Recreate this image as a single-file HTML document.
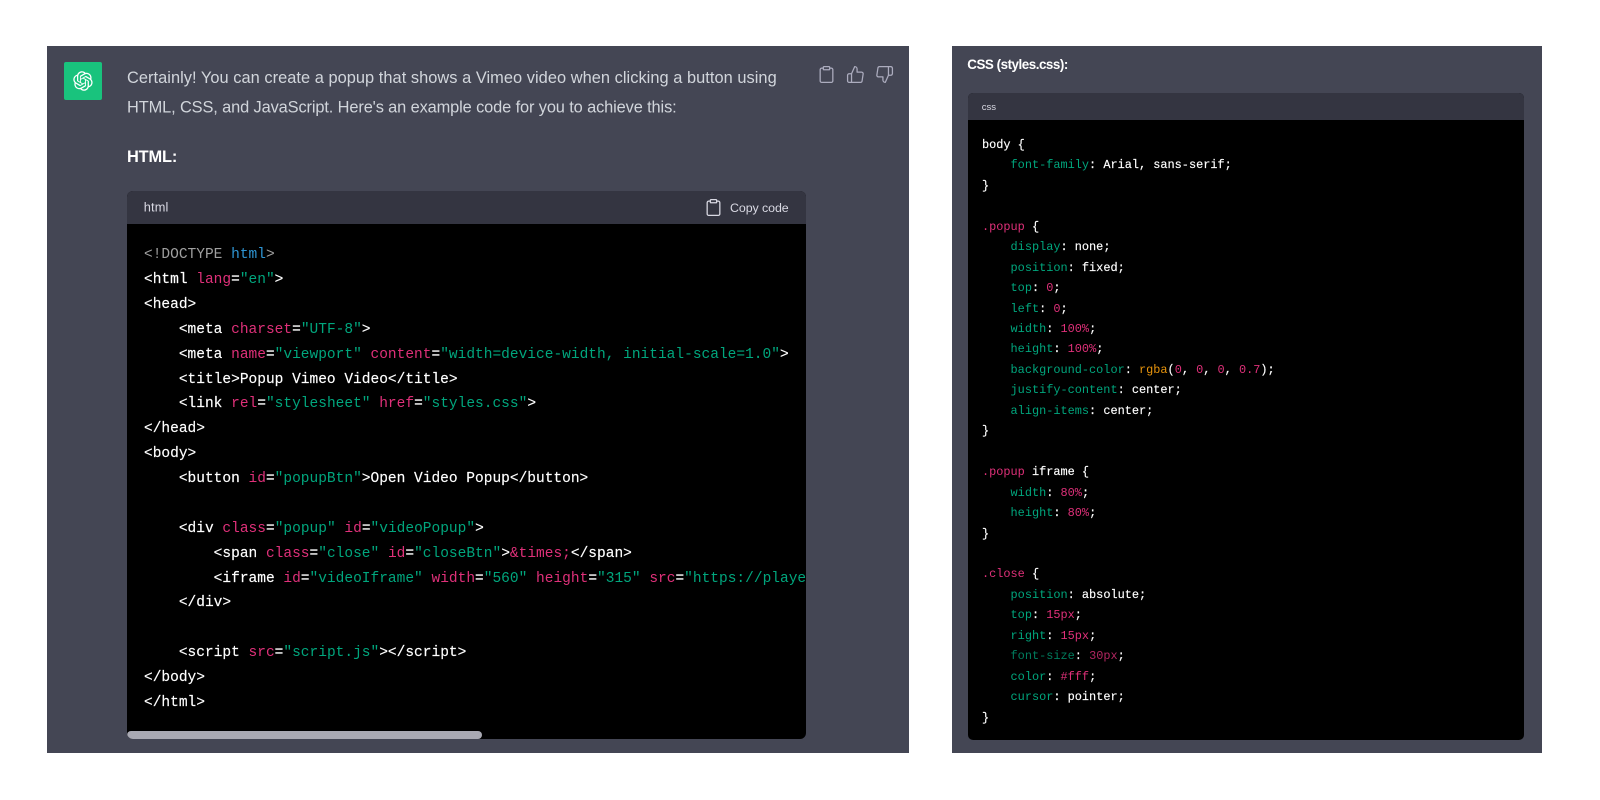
<!DOCTYPE html>
<html lang="en">
<head>
<meta charset="utf-8">
<title>Popup Vimeo Video</title>
<style>
html,body{margin:0;padding:0;width:1600px;height:800px;background:#fff;overflow:hidden}
.a{position:absolute}
.panel{background:#444654}
.hd{background:#343541}
.code{background:#000}
pre{position:absolute;margin:0;color:#fff;font-family:"Liberation Mono",monospace;white-space:pre;-webkit-text-stroke:0.15px currentColor}
#c2{left:982px;top:134.9px;font-size:11.9px;line-height:20.46px}
i{font-style:normal;-webkit-text-stroke:0}
.r{color:#df3079}.g{color:#00a67d}.b{color:#2e95d3}.o{color:#e9950c}.m{color:#a0a0a0}
svg.t{position:absolute;left:0;top:0;width:1600px;height:800px;font-family:"Liberation Sans",sans-serif}
svg.i{position:absolute;width:19px;height:19px;fill:none;stroke-width:1.6;stroke-linecap:round;stroke-linejoin:round}
</style>
</head>
<body>
<div class="a panel" style="left:47px;top:46px;width:862px;height:707px"></div>
<div class="a panel" style="left:952px;top:46px;width:590px;height:707px"></div>

<div class="a" style="left:64px;top:62px;width:38px;height:38px;background:#19c37d;border-radius:2px"></div>
<svg class="a" style="left:73px;top:71px;width:20px;height:20px" viewBox="0 0 41 41" fill="#fff"><path d="M37.5324 16.8707C37.9808 15.5241 38.1363 14.0974 37.9886 12.6859C37.8409 11.2744 37.3934 9.91076 36.676 8.68622C35.6126 6.83404 33.9882 5.3676 32.0373 4.4985C30.0864 3.62941 27.9098 3.40259 25.8215 3.85078C24.8796 2.7893 23.7219 1.94125 22.4257 1.36341C21.1295 0.785575 19.7249 0.491269 18.3058 0.500197C16.1708 0.495044 14.0893 1.16803 12.3614 2.42214C10.6335 3.67624 9.34853 5.44666 8.6917 7.47815C7.30085 7.76286 5.98686 8.3414 4.8377 9.17505C3.68854 10.0087 2.73073 11.0782 2.02839 12.312C0.956464 14.1591 0.498905 16.2988 0.721698 18.4228C0.944492 20.5467 1.83612 22.5449 3.268 24.1293C2.81966 25.4759 2.66413 26.9026 2.81182 28.3141C2.95951 29.7256 3.40701 31.0892 4.12437 32.3138C5.18791 34.1659 6.8123 35.6322 8.76321 36.5013C10.7141 37.3704 12.8907 37.5973 14.9789 37.1492C15.9208 38.2107 17.0786 39.0587 18.3747 39.6366C19.6709 40.2144 21.0755 40.5087 22.4946 40.4998C24.6307 40.5054 26.7133 39.8321 28.4418 38.5772C30.1704 37.3223 31.4556 35.5506 32.1119 33.5179C33.5027 33.2332 34.8167 32.6547 35.9659 31.821C37.115 30.9874 38.0728 29.9178 38.7752 28.684C39.8458 26.8371 40.3023 24.6979 40.0789 22.5748C39.8556 20.4517 38.9639 18.4544 37.5324 16.8707ZM22.4978 37.8849C20.7443 37.8874 19.0459 37.2733 17.6994 36.1501C17.7601 36.117 17.8666 36.0586 17.936 36.0161L25.9004 31.4156C26.1003 31.3019 26.2663 31.137 26.3813 30.9378C26.4964 30.7386 26.5563 30.5124 26.5549 30.2825V19.0542L29.9213 20.998C29.9389 21.0068 29.9541 21.0198 29.9656 21.0359C29.977 21.052 29.9842 21.0707 29.9867 21.0902V30.3889C29.9842 32.375 29.1946 34.2791 27.7909 35.6841C26.3872 37.0892 24.4838 37.8806 22.4978 37.8849ZM6.39227 31.0064C5.51397 29.4888 5.19742 27.7107 5.49804 25.9832C5.55718 26.0187 5.66048 26.0818 5.73461 26.1244L13.699 30.7248C13.8975 30.8408 14.1233 30.902 14.3532 30.902C14.583 30.902 14.8088 30.8408 15.0073 30.7248L24.731 25.1103V28.9979C24.7321 29.0177 24.7283 29.0376 24.7199 29.0556C24.7115 29.0736 24.6988 29.0893 24.6829 29.1012L16.6317 33.7497C14.9096 34.7416 12.8643 35.0097 10.9447 34.4954C9.02506 33.9811 7.38785 32.7263 6.39227 31.0064ZM4.29707 13.6194C5.17156 12.0998 6.55279 10.9364 8.19885 10.3327C8.19885 10.4013 8.19491 10.5228 8.19491 10.6071V19.808C8.19351 20.0378 8.25334 20.2638 8.36823 20.4629C8.48312 20.6619 8.64893 20.8267 8.84863 20.9404L18.5723 26.5542L15.206 28.4979C15.1894 28.5089 15.1703 28.5155 15.1505 28.5173C15.1307 28.5191 15.1107 28.516 15.0924 28.5082L7.04046 23.8557C5.32135 22.8601 4.06716 21.2235 3.55289 19.3046C3.03862 17.3858 3.30624 15.3413 4.29707 13.6194ZM31.955 20.0556L22.2312 14.4411L25.5976 12.4981C25.6142 12.4872 25.6333 12.4805 25.6531 12.4787C25.6729 12.4769 25.6928 12.4801 25.7111 12.4879L33.7631 17.1364C34.9967 17.849 36.0017 18.8982 36.6606 20.1613C37.3194 21.4244 37.6047 22.849 37.4832 24.2684C37.3617 25.6878 36.8382 27.0432 35.9743 28.1759C35.1103 29.3086 33.9415 30.1717 32.6047 30.6641C32.6047 30.5947 32.6047 30.4733 32.6047 30.3889V21.188C32.6066 20.9586 32.5474 20.7328 32.4332 20.5338C32.319 20.3348 32.154 20.1698 31.955 20.0556ZM35.3055 15.0128C35.2464 14.9765 35.1431 14.9142 35.069 14.8717L27.1045 10.2712C26.906 10.1554 26.6803 10.0943 26.4504 10.0943C26.2206 10.0943 25.9948 10.1554 25.7963 10.2712L16.0726 15.8858V11.9982C16.0715 11.9783 16.0753 11.9585 16.0837 11.9405C16.0921 11.9225 16.1048 11.9068 16.1207 11.8949L24.1719 7.25025C25.4053 6.53903 26.8158 6.19376 28.2383 6.25482C29.6608 6.31589 31.0364 6.78077 32.2044 7.59508C33.3723 8.40939 34.2842 9.53945 34.8334 10.8531C35.3826 12.1667 35.5464 13.6095 35.3055 15.0128ZM14.2424 21.9419L10.8752 19.9981C10.8576 19.9893 10.8423 19.9763 10.8309 19.9602C10.8195 19.9441 10.8122 19.9254 10.8098 19.9058V10.6071C10.8107 9.18295 11.2173 7.78848 11.9819 6.58696C12.7466 5.38544 13.8377 4.42659 15.1275 3.82264C16.4173 3.21869 17.8524 2.99464 19.2649 3.1767C20.6775 3.35876 22.0089 3.93941 23.1034 4.85067C23.0427 4.88379 22.937 4.94215 22.8668 4.98473L14.9024 9.58517C14.7025 9.69878 14.5366 9.86356 14.4215 10.0626C14.3065 10.2616 14.2466 10.4877 14.2479 10.7175L14.2424 21.9419ZM16.071 17.9991L20.4018 15.4978L24.7325 17.9975V22.9985L20.4018 25.4983L16.071 22.9985V17.9991Z"/></svg>

<div class="a code" style="left:127px;top:191px;width:679px;height:548px;border-radius:6px;overflow:hidden">
  <div class="a hd" style="left:0;top:0;width:679px;height:33px"></div>
  <div class="a" style="left:0;top:540px;width:355px;height:8px;background:#a9a9b3;border-radius:4px"></div>
</div>
<div class="a" style="left:127px;top:224px;width:679px;height:506px;overflow:hidden">
<pre style="left:17px;top:19.2px;font-size:14.52px;line-height:24.87px"><i class="m">&lt;!DOCTYPE</i> <i class="b">html</i><i class="m">&gt;</i>
&lt;html <i class="r">lang</i>=<i class="g">"en"</i>&gt;
&lt;head&gt;
    &lt;meta <i class="r">charset</i>=<i class="g">"UTF-8"</i>&gt;
    &lt;meta <i class="r">name</i>=<i class="g">"viewport"</i> <i class="r">content</i>=<i class="g">"width=device-width, initial-scale=1.0"</i>&gt;
    &lt;title&gt;Popup Vimeo Video&lt;/title&gt;
    &lt;link <i class="r">rel</i>=<i class="g">"stylesheet"</i> <i class="r">href</i>=<i class="g">"styles.css"</i>&gt;
&lt;/head&gt;
&lt;body&gt;
    &lt;button <i class="r">id</i>=<i class="g">"popupBtn"</i>&gt;Open Video Popup&lt;/button&gt;

    &lt;div <i class="r">class</i>=<i class="g">"popup"</i> <i class="r">id</i>=<i class="g">"videoPopup"</i>&gt;
        &lt;span <i class="r">class</i>=<i class="g">"close"</i> <i class="r">id</i>=<i class="g">"closeBtn"</i>&gt;<i class="r">&amp;times;</i>&lt;/span&gt;
        &lt;iframe <i class="r">id</i>=<i class="g">"videoIframe"</i> <i class="r">width</i>=<i class="g">"560"</i> <i class="r">height</i>=<i class="g">"315"</i> <i class="r">src</i>=<i class="g">"https://player.vimeo.com/video/"</i>&gt;
    &lt;/div&gt;

    &lt;script <i class="r">src</i>=<i class="g">"script.js"</i>&gt;&lt;/script&gt;
&lt;/body&gt;
&lt;/html&gt;</pre>
</div>

<div class="a code" style="left:968px;top:93px;width:556px;height:647px;border-radius:5px;overflow:hidden">
  <div class="a hd" style="left:0;top:0;width:556px;height:27px"></div>
</div>
<pre id="c2">body {
    <i class="g">font-family</i>: Arial, sans-serif;
}

<i class="r">.popup</i> {
    <i class="g">display</i>: none;
    <i class="g">position</i>: fixed;
    <i class="g">top</i>: <i class="r">0</i>;
    <i class="g">left</i>: <i class="r">0</i>;
    <i class="g">width</i>: <i class="r">100%</i>;
    <i class="g">height</i>: <i class="r">100%</i>;
    <i class="g">background-color</i>: <i class="o">rgba</i>(<i class="r">0</i>, <i class="r">0</i>, <i class="r">0</i>, <i class="r">0.7</i>);
    <i class="g">justify-content</i>: center;
    <i class="g">align-items</i>: center;
}

<i class="r">.popup</i> iframe {
    <i class="g">width</i>: <i class="r">80%</i>;
    <i class="g">height</i>: <i class="r">80%</i>;
}

<i class="r">.close</i> {
    <i class="g">position</i>: absolute;
    <i class="g">top</i>: <i class="r">15px</i>;
    <i class="g">right</i>: <i class="r">15px</i>;
    <i class="g" style="opacity:.75">font-size</i>: <i class="r" style="opacity:.8">30px</i>;
    <i class="g">color</i>: <i class="r">#fff</i>;
    <i class="g">cursor</i>: pointer;
}</pre>

<svg class="t" viewBox="0 0 1600 800">
  <text x="127" y="83" font-size="16.4" fill="#d1d5db" textLength="649.7">Certainly! You can create a popup that shows a Vimeo video when clicking a button using</text>
  <text x="127" y="112.7" font-size="16.4" fill="#d1d5db" textLength="549.7">HTML, CSS, and JavaScript. Here's an example code for you to achieve this:</text>
  <text x="127" y="162" font-size="16.4" font-weight="700" fill="#fff" textLength="50.3">HTML:</text>
  <text x="143.7" y="211.7" font-size="12.8" fill="#d9d9e3" textLength="24.7">html</text>
  <text x="730" y="212" font-size="12.4" fill="#d9d9e3" textLength="58.7">Copy code</text>
  <text x="967.3" y="69" font-size="13.4" font-weight="700" fill="#fff" textLength="101">CSS (styles.css):</text>
  <text x="981.7" y="110" font-size="9.6" fill="#d9d9e3" textLength="14.3">css</text>
</svg>

<svg class="i" style="left:817px;top:65px;stroke:#acacbe" viewBox="0 0 24 24"><path d="M16 4h2a2 2 0 0 1 2 2v14a2 2 0 0 1-2 2H6a2 2 0 0 1-2-2V6a2 2 0 0 1 2-2h2"/><rect x="8" y="2" width="8" height="4" rx="1"/></svg>
<svg class="i" style="left:846px;top:65px;stroke:#acacbe" viewBox="0 0 24 24"><path d="M14 9V5a3 3 0 0 0-3-3l-4 9v11h11.28a2 2 0 0 0 2-1.7l1.38-9a2 2 0 0 0-2-2.3zM7 22H4a2 2 0 0 1-2-2v-7a2 2 0 0 1 2-2h3"/></svg>
<svg class="i" style="left:875px;top:65px;stroke:#acacbe" viewBox="0 0 24 24"><path d="M10 15v4a3 3 0 0 0 3 3l4-9V2H5.72a2 2 0 0 0-2 1.7l-1.38 9a2 2 0 0 0 2 2.3zm7-13h2.67A2.31 2.31 0 0 1 22 4v7a2.31 2.31 0 0 1-2.33 2H17"/></svg>
<svg class="i" style="left:704px;top:198px;stroke:#d9d9e3" viewBox="0 0 24 24"><path d="M16 4h2a2 2 0 0 1 2 2v14a2 2 0 0 1-2 2H6a2 2 0 0 1-2-2V6a2 2 0 0 1 2-2h2"/><rect x="8" y="2" width="8" height="4" rx="1"/></svg>
</body>
</html>
